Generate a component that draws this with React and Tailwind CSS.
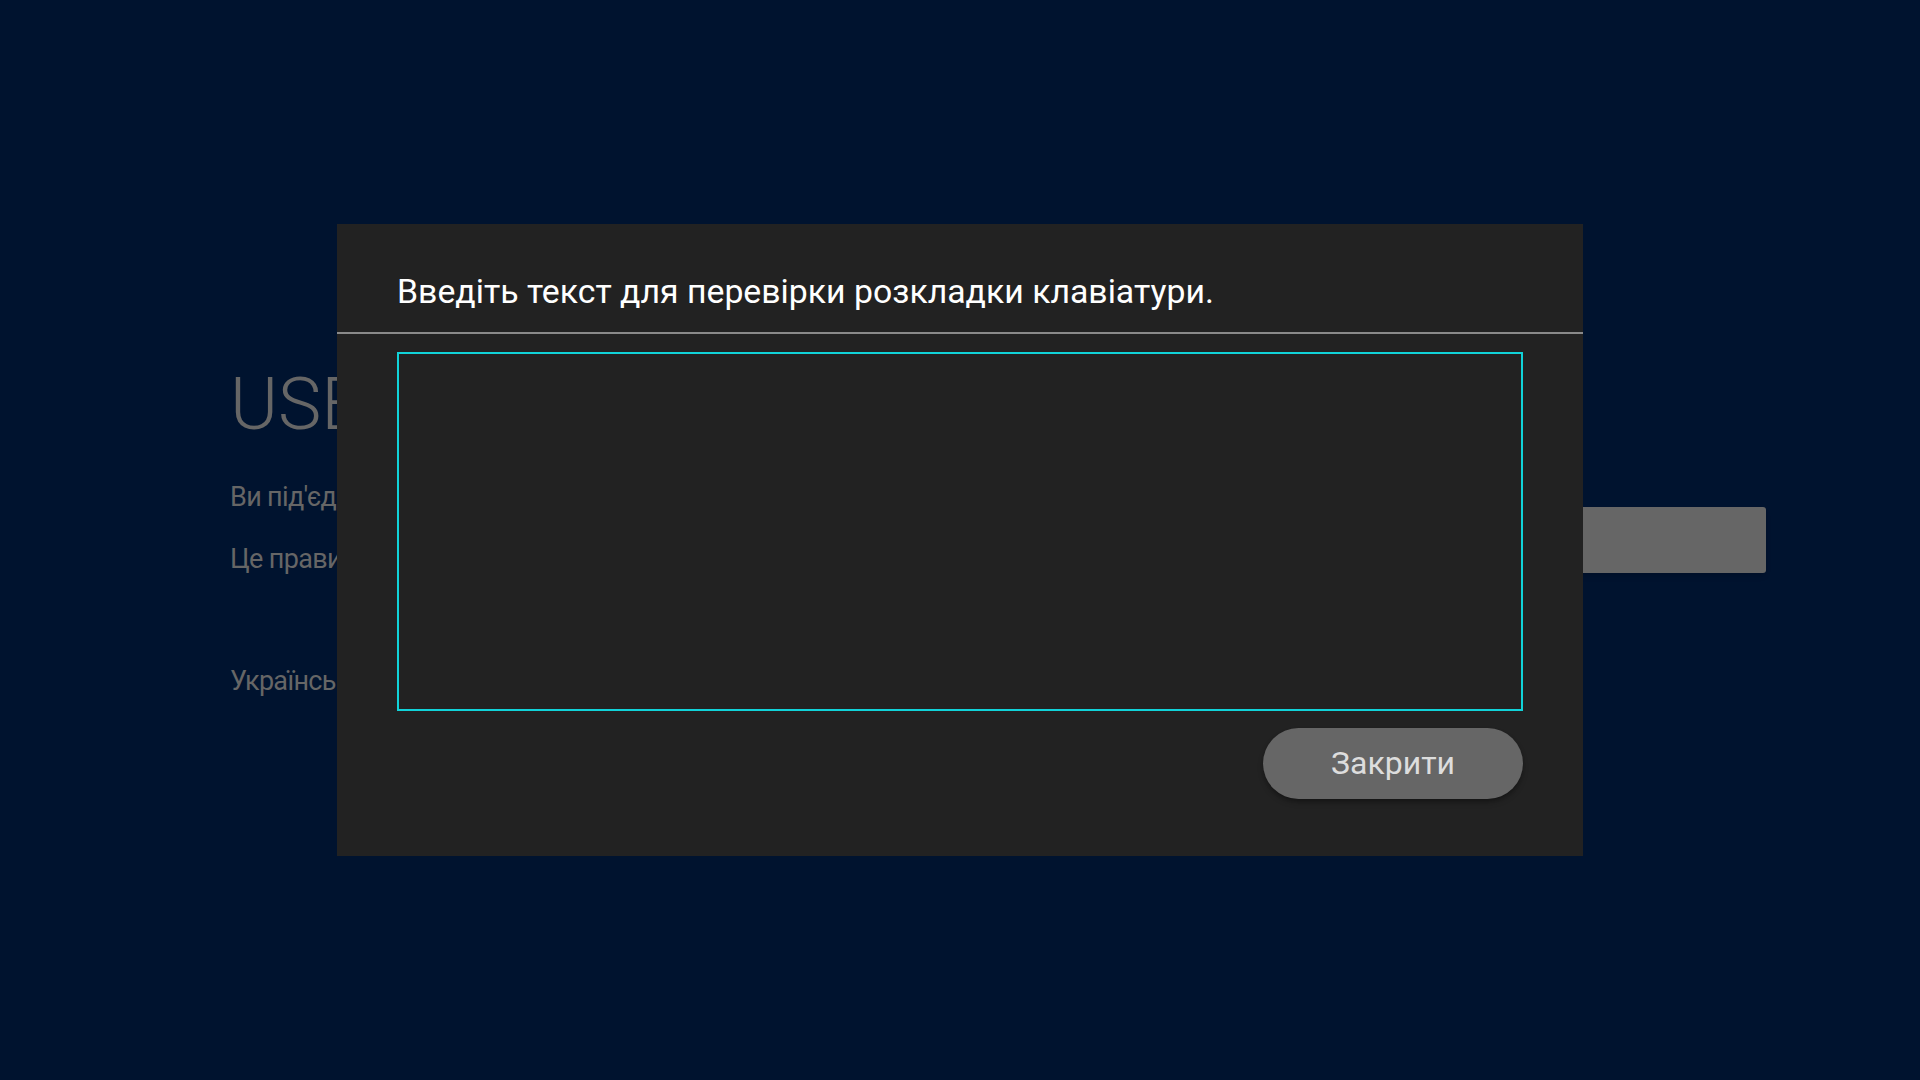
export default function App() {
  return (
    <div className="relative h-screen w-full overflow-hidden bg-[#00132f] font-['Roboto','Liberation_Sans',sans-serif]">
      {/* Background screen */}
      <div className="flex pl-[230px] pr-[154px] pt-[368px]">
        <div className="flex-1">
          <h1 className="text-[73px] font-light leading-none text-[#666666]">
            USB-клавіатура
          </h1>
          <p className="mt-[43px] text-[27px] leading-none tracking-tight text-[#666666]">
            Ви під'єднали USB-клавіатуру.
          </p>
          <p className="mt-[35px] text-[27px] leading-none tracking-tight text-[#666666]">
            Це правильна розкладка?
          </p>
          <p className="mt-[95px] text-[27px] leading-none tracking-tight text-[#666666]">
            Українська
          </p>
        </div>
        <div className="pt-[139px]">
          <div className="h-[66px] w-[420px] rounded-[3px] bg-[#666666] shadow-md"></div>
        </div>
      </div>

      {/* Dialog */}
      <div className="absolute left-[337px] top-[224px] flex h-[632px] w-[1246px] flex-col bg-[#222222]">
        <h2 className="px-[60px] pt-[51px] text-[33.8px] leading-none text-white">
          Введіть текст для перевірки розкладки клавіатури.
        </h2>
        <div className="mt-[23px] h-[2px] bg-[#8a8a8a]"></div>
        <div className="flex flex-col px-[60px]">
          <textarea className="mt-[18px] h-[359px] w-full resize-none border-2 border-[#11d3d9] bg-[#222222] p-3 text-[28px] text-white outline-none"></textarea>
          <div className="mt-[17px] flex justify-end">
            <button className="h-[71px] w-[260px] rounded-full bg-[#666666] text-[32px] text-[#dddddd] shadow-md shadow-black/30">
              Закрити
            </button>
          </div>
        </div>
      </div>
    </div>
  );
}
